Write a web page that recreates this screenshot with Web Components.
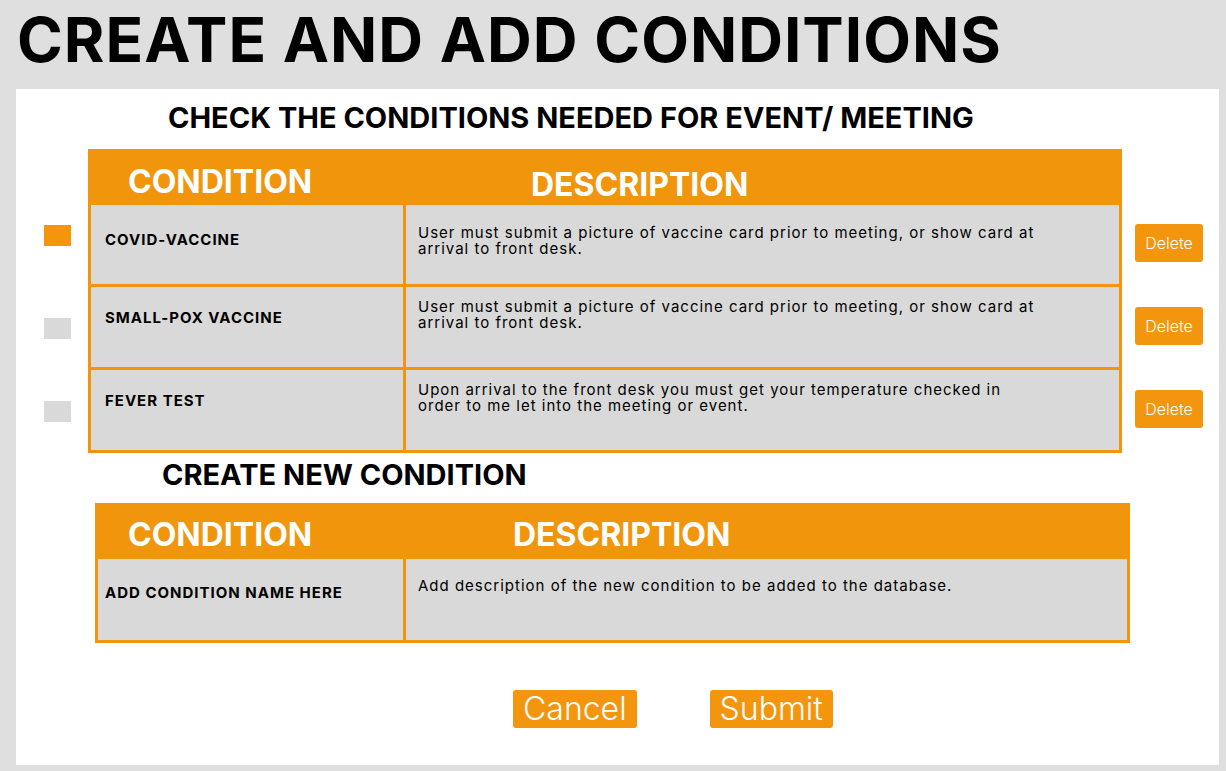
<!DOCTYPE html>
<html lang="en">
<head>
<meta charset="utf-8">
<meta name="viewport" content="width=device-width, initial-scale=1">
<title>Create and add conditions</title>
<style>
  html { background: #dfdfdf; }
  body { margin: 0; font-family: Inter, "Liberation Sans", sans-serif; color: #000; --orange: #f1950c; --cell: #d9d9d9; }
</style>
</head>
<body>
<conditions-page>
  <span slot="title">CREATE AND ADD CONDITIONS</span>
  <section-heading class="check">CHECK THE CONDITIONS NEEDED FOR EVENT/ MEETING</section-heading>
  <condition-list></condition-list>
  <section-heading class="create">CREATE NEW CONDITION</section-heading>
  <condition-form></condition-form>
  <form-actions>
    <action-button size="large">Cancel</action-button>
    <action-button size="large">Submit</action-button>
  </form-actions>
</conditions-page>

<script>
const TABLE_STYLE = `
  table { width: 100%; table-layout: fixed; border-collapse: separate; border-spacing: 0; }
  th, td { padding: 0; text-align: left; vertical-align: top; box-sizing: border-box; }
  thead tr { height: 56px; }
  tbody tr { height: 82px; }
  thead th { font-size: 32px; line-height: 32px; font-weight: 700; color: #fff; background: var(--orange); }
  .name, .text { background: var(--cell); border: 0 solid var(--orange); border-width: 0 3px 3px 0; font-size: 15px; line-height: 16px; letter-spacing: 1px; }
  .name { border-left-width: 3px; font-weight: 700; }
`;

function define(name, html, setup) {
  const template = document.createElement('template');
  template.innerHTML = html;
  customElements.define(name, class extends HTMLElement {
    constructor() {
      super();
      this.attachShadow({ mode: 'open' }).append(template.content.cloneNode(true));
    }
    connectedCallback() { if (setup) setup(this.shadowRoot, this); }
  });
}

define('action-button', `
  <style>
    :host { display: inline-block; }
    button { display: block; width: 100%; height: 38px; padding: 0 10px; border: 0; border-radius: 3px; background: #f3960d; color: #fff; font: 300 16px/38px Inter, "Liberation Sans", sans-serif; cursor: pointer; }
    :host([size="large"]) button { font-size: 32px; }
  </style>
  <button type="button"><slot></slot></button>
`);

define('section-heading', `
  <style>
    :host { display: block; }
    h2 { margin: 0; font-size: 29px; line-height: 32px; font-weight: 700; }
  </style>
  <h2><slot></slot></h2>
`);

define('form-actions', `
  <style>
    :host { display: flex; gap: 73px; }
  </style>
  <slot></slot>
`);

define('condition-list', `
  <style>
    :host { display: block; }
    ${TABLE_STYLE}
    tbody tr { height: 83px; }
    tbody tr:first-child { height: 82px; }
    .tick-col { width: 44px; }
    .name-col { width: 318px; }
    .delete-col { width: 81px; }
    thead .name-head { padding: 17px 0 0 40px; }
    thead .text-head { padding: 20px 0 0 125px; }
    .name { padding: 23px 14px 0; }
    .text { padding: 12px 80px 0 12px; }
    .tick { padding-top: 31px; }
    .delete { padding: 20px 0 0 13px; }
    tr:first-child .name { padding-top: 27px; }
    tr:first-child .text { padding-top: 20px; }
    tr:first-child .tick { padding-top: 20px; }
    tr:first-child .delete { padding-top: 19px; }
    .delete action-button { display: block; }
    input { appearance: none; display: block; width: 27px; height: 21px; margin: 0; background: var(--cell); cursor: pointer; }
    input:checked { background: #f3960d; }
  </style>
  <table>
    <colgroup><col class="tick-col"><col class="name-col"><col><col class="delete-col"></colgroup>
    <thead><tr><td></td><th class="name-head" scope="col">CONDITION</th><th class="text-head" scope="col">DESCRIPTION</th><td></td></tr></thead>
    <tbody></tbody>
  </table>
`, root => {
  const conditions = [
    { name: 'COVID-VACCINE', text: 'User must submit a picture of vaccine card prior to meeting, or show card at arrival to front desk.', checked: true },
    { name: 'SMALL-POX VACCINE', text: 'User must submit a picture of vaccine card prior to meeting, or show card at arrival to front desk.' },
    { name: 'FEVER TEST', text: 'Upon arrival to the front desk you must get your temperature checked in order to me let into the meeting or event.' }
  ];
  root.querySelector('tbody').innerHTML = conditions.map((c, i) => `
    <tr>
      <td class="tick"><input type="checkbox" id="c${i}" ${c.checked ? 'checked' : ''}></td>
      <th class="name" scope="row"><label for="c${i}">${c.name}</label></th>
      <td class="text">${c.text}</td>
      <td class="delete"><action-button>Delete</action-button></td>
    </tr>`).join('');
});

define('condition-form', `
  <style>
    :host { display: block; }
    ${TABLE_STYLE}
    .name-col { width: 311px; }
    tbody tr { height: 84px; }
    thead .name-head { padding: 16px 0 0 33px; }
    thead .text-head { padding: 16px 0 0 107px; }
    .name { padding: 21px 7px 0; }
    .text { padding: 15px 12px 0; }
    input, textarea { display: block; box-sizing: border-box; width: 100%; margin: 0; padding: 0; border: 0; outline: 0; background: none; resize: none; font: inherit; letter-spacing: inherit; color: inherit; }
    input { height: 24px; }
    textarea { height: 48px; line-height: 24px; overflow: hidden; }
    ::placeholder { color: #000; opacity: 1; }
  </style>
  <table>
    <colgroup><col class="name-col"><col></colgroup>
    <thead><tr><th class="name-head" id="n" scope="col">CONDITION</th><th class="text-head" id="d" scope="col">DESCRIPTION</th></tr></thead>
    <tbody><tr>
      <td class="name"><input type="text" aria-labelledby="n" placeholder="ADD CONDITION NAME HERE"></td>
      <td class="text"><textarea aria-labelledby="d" placeholder="Add description of the new condition to be added to the database."></textarea></td>
    </tr></tbody>
  </table>
`);

define('conditions-page', `
  <style>
    :host { display: block; padding: 0 7px 6px 16px; }
    h1 { margin: 0; padding: 0 0 9px 1px; font-size: 62px; line-height: 80px; font-weight: 700; letter-spacing: 1px; }
    main { display: block; background: #fff; padding: 13px 0 37px; }
    ::slotted(.check) { padding: 0 0 15px 152px; }
    ::slotted(.create) { padding: 6px 0 12px 146px; }
    ::slotted(condition-list) { padding: 0 16px 0 28px; }
    ::slotted(condition-form) { padding: 0 89px 0 79px; }
    ::slotted(form-actions) { padding: 47px 0 0 497px; }
  </style>
  <h1><slot name="title"></slot></h1>
  <main><slot></slot></main>
`);
</script>
</body>
</html>
